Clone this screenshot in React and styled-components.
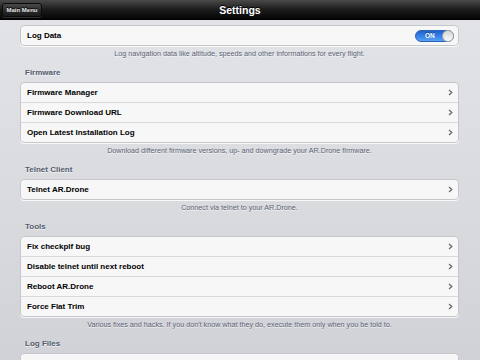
import React from 'react'
import styled, { createGlobalStyle } from 'styled-components'

const GlobalStyle = createGlobalStyle`
  html, body {
    margin: 0;
    padding: 0;
    width: 480px;
    height: 360px;
    overflow: hidden;
    font-family: "Liberation Sans", Arial, sans-serif;
    background: #dcdee2;
  }
`

const sections = [
  {
    rows: [{ label: 'Log Data', toggle: true }],
    footer: 'Log navigation data like altitude, speeds and other informations for every flight.',
  },
  {
    title: 'Firmware',
    rows: [
      { label: 'Firmware Manager' },
      { label: 'Firmware Download URL' },
      { label: 'Open Latest Installation Log' },
    ],
    footer: 'Download different firmware versions, up- and downgrade your AR.Drone firmware.',
  },
  {
    title: 'Telnet Client',
    rows: [{ label: 'Telnet AR.Drone' }],
    footer: 'Connect via telnet to your AR.Drone.',
  },
  {
    title: 'Tools',
    rows: [
      { label: 'Fix checkplf bug' },
      { label: 'Disable telnet until next reboot' },
      { label: 'Reboot AR.Drone' },
      { label: 'Force Flat Trim' },
    ],
    footer: "Various fixes and hacks. If you don't know what they do, execute them only when you be told to.",
  },
  {
    title: 'Log Files',
    rows: [{ label: '' }],
  },
]

export default function App() {
  return (
    <Screen>
      <GlobalStyle />
      <NavBar>
        <BackButton>Main Menu</BackButton>
        <Title>Settings</Title>
      </NavBar>
      <Content>
        {sections.map((section, i) => (
          <Section key={i}>
            {section.title && <SectionTitle>{section.title}</SectionTitle>}
            <Card>
              {section.rows.map((row, j) => (
                <Row key={j}>
                  <RowLabel>{row.label}</RowLabel>
                  {row.toggle ? (
                    <Toggle>
                      <ToggleText>ON</ToggleText>
                      <Knob />
                    </Toggle>
                  ) : (
                    <Chevron viewBox="0 0 5 7">
                      <path d="M1 1 L3.8 3.5 L1 6" fill="none" stroke="#6b6b6b" strokeWidth="1.3" />
                    </Chevron>
                  )}
                </Row>
              ))}
            </Card>
            {section.footer && <SectionFooter>{section.footer}</SectionFooter>}
          </Section>
        ))}
      </Content>
    </Screen>
  )
}

const Screen = styled.div`
  width: 480px;
  height: 360px;
  overflow: hidden;
  display: flex;
  flex-direction: column;
  background: linear-gradient(180deg, #e2e4e8 0%, #d8dade 60%, #d0d2d7 100%);
`

const NavBar = styled.div`
  height: 20px;
  flex-shrink: 0;
  position: relative;
  display: flex;
  align-items: center;
  justify-content: center;
  background: linear-gradient(180deg, #4a4a4a 0%, #1c1c1c 50%, #050505 100%);
  border-bottom: 1px solid #000;
  box-sizing: border-box;
`

const BackButton = styled.div`
  position: absolute;
  left: 2px;
  top: 3px;
  height: 14px;
  width: 40px;
  box-sizing: border-box;
  display: flex;
  align-items: center;
  justify-content: center;
  border-radius: 3px;
  border: 1px solid #0c0c0c;
  background: linear-gradient(180deg, #4a4a4a 0%, #2a2a2a 55%, #1a1a1a 100%);
  box-shadow: 0 1px 0 rgba(255, 255, 255, 0.15);
  color: #e6e6e6;
  font-size: 6px;
  font-weight: bold;
  text-shadow: 0 -1px 0 #000;
`

const Title = styled.div`
  color: #fff;
  font-size: 10.5px;
  font-weight: bold;
  text-shadow: 0 -1px 0 #000;
`

const Content = styled.div`
  padding: 5px 21px 0 20px;
  display: flex;
  flex-direction: column;
  gap: 11px;
`

const Section = styled.div`
  display: flex;
  flex-direction: column;
`

const SectionTitle = styled.div`
  height: 8px;
  line-height: 8px;
  margin: 0 0 5px 5px;
  font-size: 8px;
  font-weight: bold;
  color: #535c6e;
  text-shadow: 0 1px 0 rgba(255, 255, 255, 0.7);
`

const Card = styled.div`
  background: #f7f7f7;
  border: 1px solid #c6c7ca;
  border-radius: 4px;
  box-shadow: 0 1px 0 rgba(255, 255, 255, 0.8);
  overflow: hidden;
`

const Row = styled.div`
  height: 19px;
  display: flex;
  align-items: center;
  justify-content: space-between;
  padding: 0 4px 0 6px;
  & + & {
    border-top: 1px solid #d9d9d9;
  }
`

const RowLabel = styled.span`
  font-size: 8px;
  font-weight: bold;
  color: #000;
`

const Chevron = styled.svg`
  width: 5px;
  height: 7px;
  margin-right: 1px;
`

const Toggle = styled.div`
  position: relative;
  width: 39px;
  height: 12px;
  box-sizing: border-box;
  border-radius: 6px;
  border: 1px solid #2a64b8;
  background: linear-gradient(180deg, #1f62c9 0%, #3a86ec 60%, #5aa0f2 100%);
  display: flex;
  align-items: center;
`

const ToggleText = styled.span`
  margin-left: 9px;
  color: #fff;
  font-size: 6.5px;
  font-weight: bold;
  text-shadow: 0 -1px 0 rgba(0, 0, 0, 0.3);
`

const Knob = styled.div`
  position: absolute;
  right: -1px;
  top: -1px;
  width: 12px;
  height: 12px;
  box-sizing: border-box;
  border-radius: 50%;
  border: 1px solid #a8a8a8;
  background: linear-gradient(180deg, #d6d6d6 0%, #fafafa 100%);
`

const SectionFooter = styled.div`
  height: 8px;
  line-height: 8px;
  margin-top: 4px;
  text-align: center;
  font-size: 7.2px;
  color: #5a6274;
  text-shadow: 0 1px 0 rgba(255, 255, 255, 0.7);
`
